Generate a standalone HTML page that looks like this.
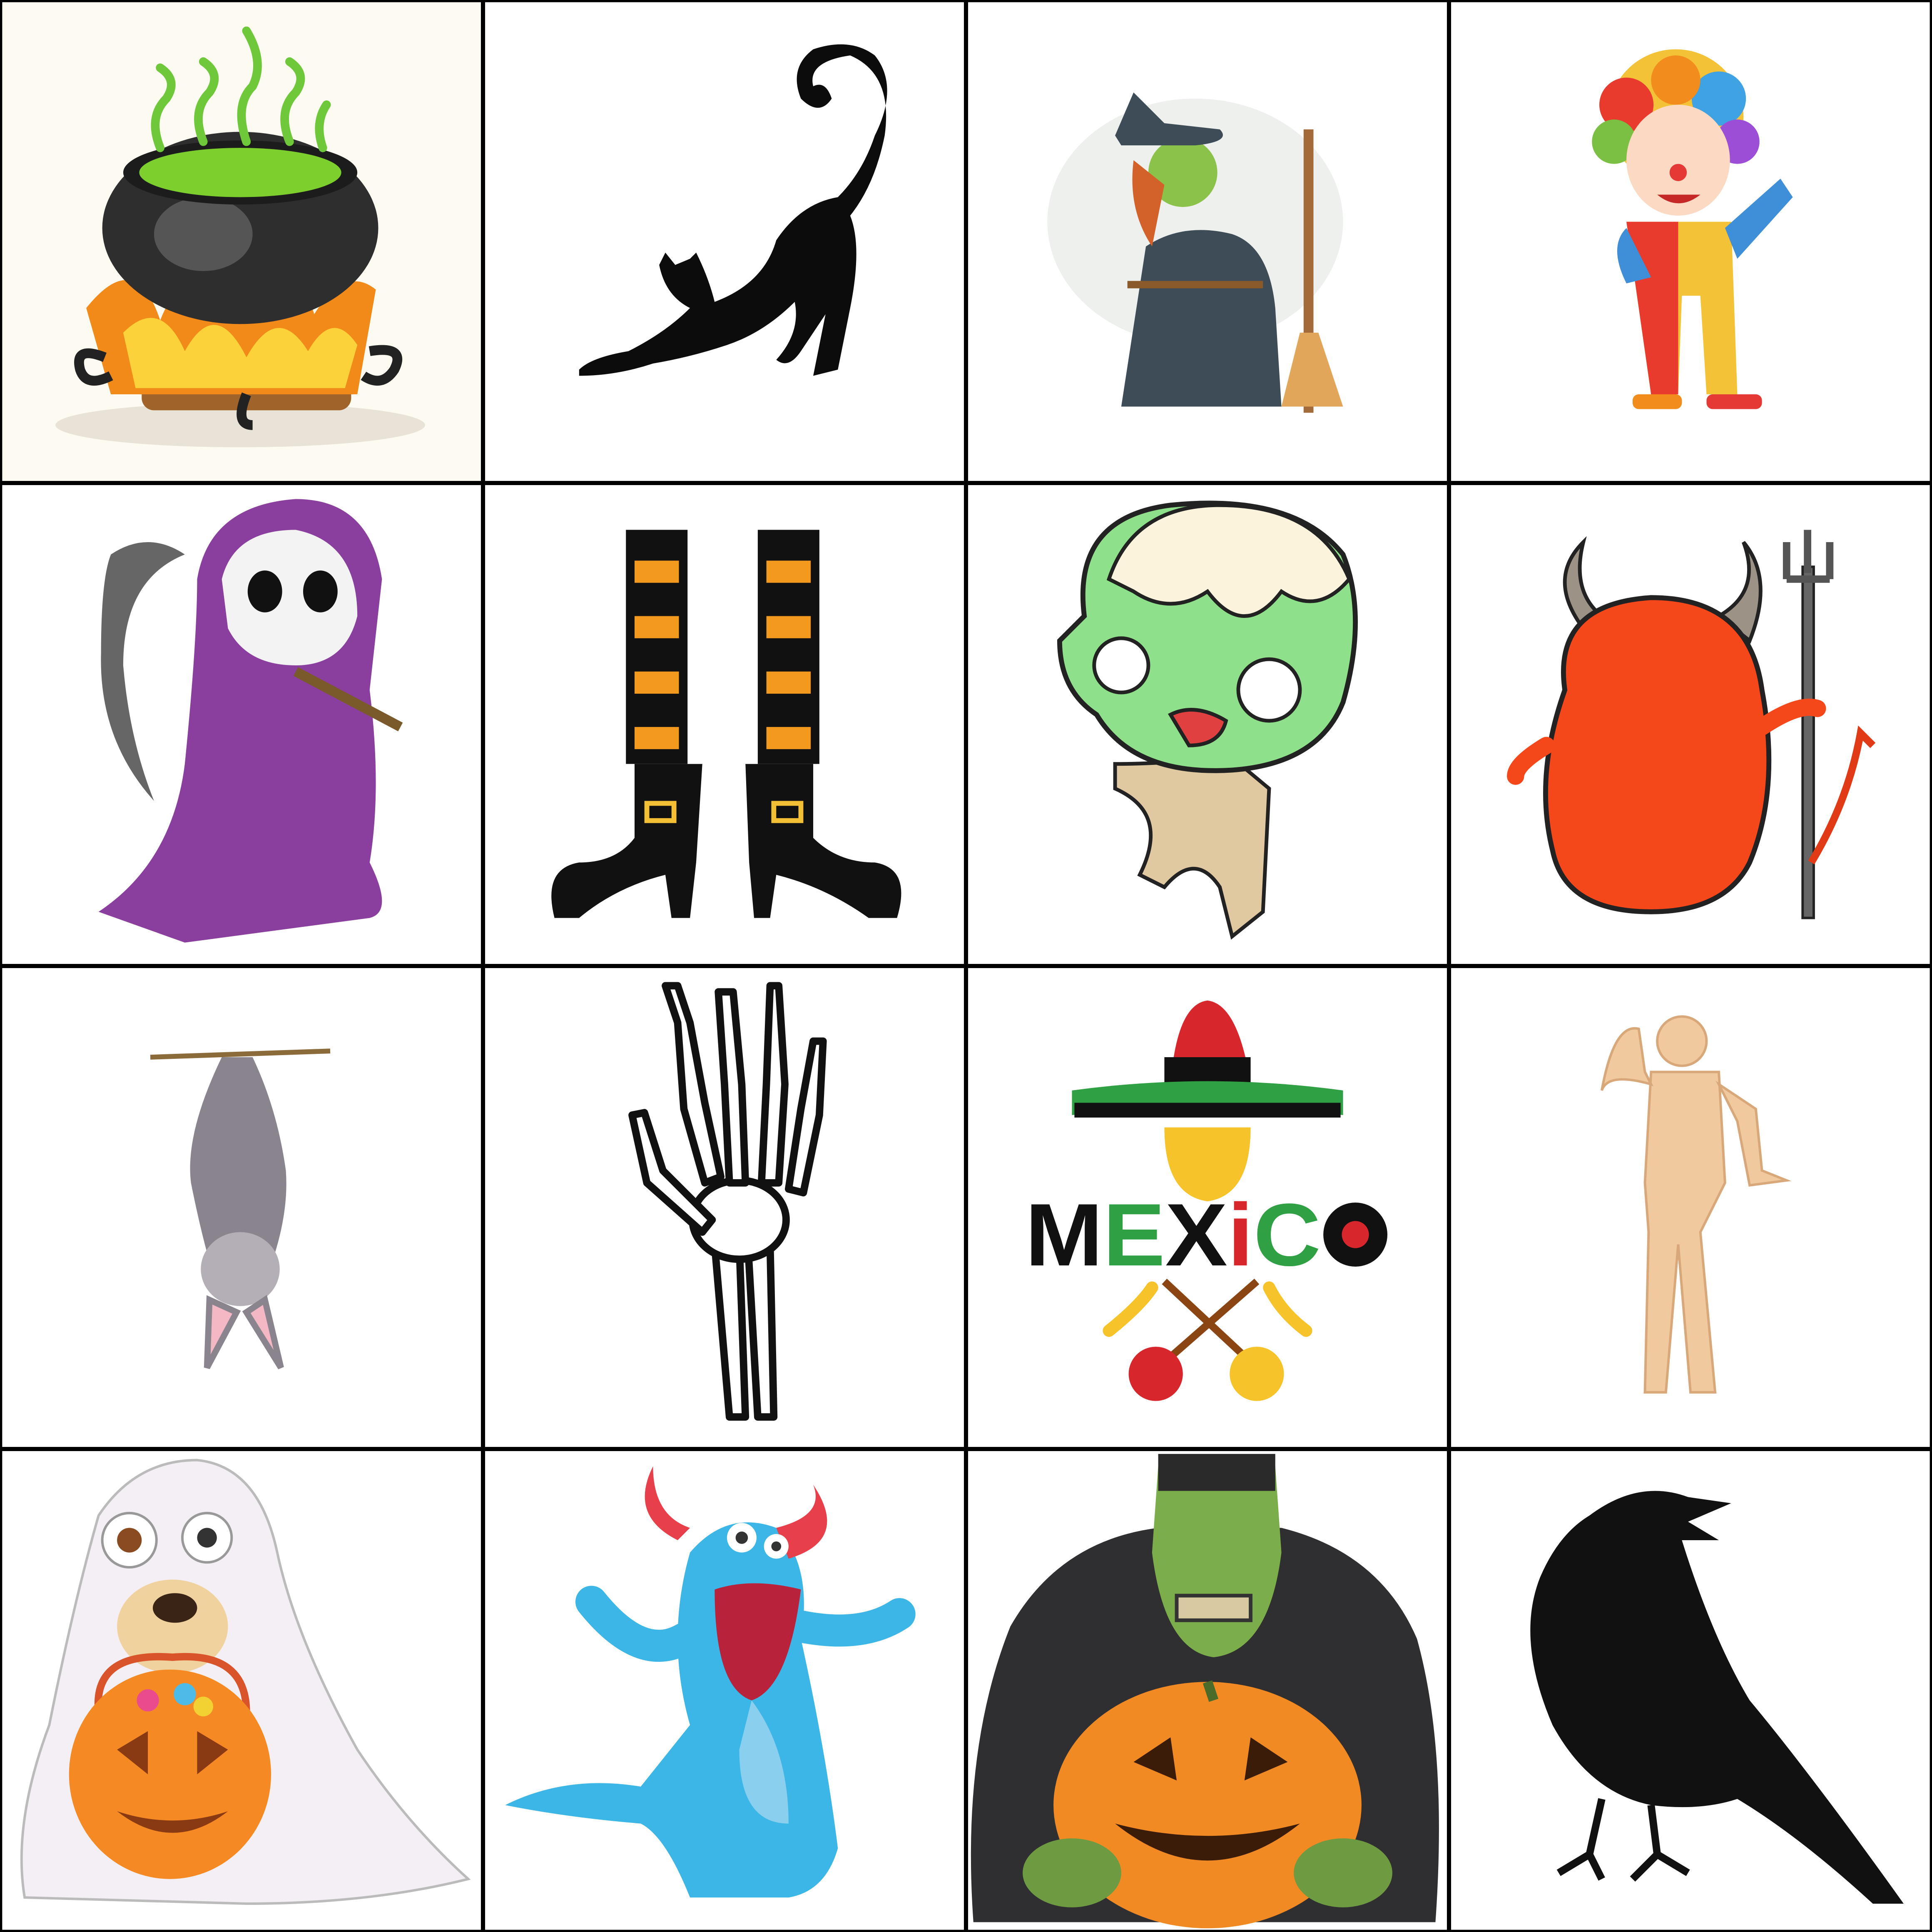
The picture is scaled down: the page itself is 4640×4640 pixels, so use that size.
<!DOCTYPE html>
<html><head><meta charset="utf-8"><style>
html,body{margin:0;padding:0;background:#fff}
svg{display:block}
</style></head><body>
<svg width="4640" height="4640" viewBox="0 0 1568 1568" xmlns="http://www.w3.org/2000/svg">
<rect width="1568" height="1568" fill="#fff"/>
<rect x="0" y="0" width="392" height="392" fill="#fdfaf1"/>

<!-- Cell 1: cauldron -->
<g>
<ellipse cx="195" cy="345" rx="150" ry="18" fill="#e8e3d6"/>
<rect x="115" y="305" width="170" height="28" rx="10" fill="#a0642a"/>
<path d="M70 250 Q110 200 130 260 Q150 210 170 255 Q195 200 215 255 Q240 205 255 255 Q280 215 305 235 L290 320 L90 320 Z" fill="#f28a1a"/>
<path d="M100 270 Q130 240 150 285 Q175 240 200 290 Q225 245 250 285 Q270 250 290 280 L280 315 L110 315 Z" fill="#fcd23a"/>
<ellipse cx="195" cy="185" rx="112" ry="78" fill="#2e2e2e"/>
<ellipse cx="165" cy="190" rx="40" ry="30" fill="#555"/>
<ellipse cx="195" cy="140" rx="95" ry="26" fill="#1c1c1c"/>
<ellipse cx="195" cy="140" rx="82" ry="20" fill="#7ccf2c"/>
<path d="M130 120 Q120 95 135 80 Q145 65 130 55 M165 115 Q155 90 170 75 Q180 60 165 50 M200 115 Q190 85 205 70 Q215 50 200 25 M235 115 Q225 90 240 75 Q250 60 235 50 M262 120 Q255 100 265 85" stroke="#6fc83a" stroke-width="7" fill="none" stroke-linecap="round"/>
<path d="M85 290 Q60 280 65 300 Q70 315 90 305 M300 285 Q330 280 320 300 Q310 315 295 305 M200 320 Q190 345 205 345" stroke="#222" stroke-width="8" fill="none"/>
</g>

<!-- Cell 2: cat -->
<path d="M470 300 Q480 290 510 285 Q540 270 560 250 Q540 240 535 215 L540 205 L548 215 L560 210 L565 205 Q575 225 580 245 Q620 230 630 195 Q650 165 680 160 Q700 140 710 110 Q730 70 710 45 Q690 30 660 40 Q640 55 650 80 Q665 95 675 80 Q670 65 660 70 Q655 50 690 45 Q725 60 718 110 Q710 150 690 175 Q700 200 690 250 L680 300 L660 305 L670 255 Q660 270 650 285 Q640 300 630 292 Q650 270 645 245 Q620 270 590 280 Q560 290 530 295 Q500 305 470 305 Z" fill="#0c0c0c"/>

<!-- Cell 3: witch -->
<ellipse cx="970" cy="180" rx="120" ry="100" fill="#eef0ee"/>
<path d="M910 330 L930 200 Q960 180 1000 190 Q1030 200 1035 250 L1040 330 Z" fill="#3e4c58"/>
<circle cx="960" cy="140" r="28" fill="#8bc34a"/>
<path d="M905 110 L920 75 L945 100 L990 105 Q1000 115 970 118 L910 118 Z" fill="#3e4c58"/>
<path d="M920 130 Q915 170 935 200 L945 150 Z" fill="#d2612a"/>
<rect x="1058" y="105" width="8" height="230" fill="#a36b3a"/>
<path d="M1055 270 L1070 270 L1090 330 L1040 330 Z" fill="#e1a659"/>
<rect x="915" y="228" width="110" height="6" fill="#8a5a2a"/>

<!-- Cell 4: clown -->
<circle cx="1360" cy="95" r="55" fill="#f4c236"/>
<circle cx="1320" cy="85" r="22" fill="#e83b2e"/><circle cx="1395" cy="80" r="22" fill="#3fa3e3"/><circle cx="1310" cy="115" r="18" fill="#7bc043"/><circle cx="1410" cy="115" r="18" fill="#9c4fd6"/><circle cx="1360" cy="65" r="20" fill="#f28c1c"/>
<ellipse cx="1362" cy="130" rx="42" ry="45" fill="#fbd9c2"/>
<circle cx="1362" cy="140" r="7" fill="#e53935"/>
<path d="M1345 158 Q1362 172 1380 158 Z" fill="#c62828"/>
<path d="M1320 180 L1405 180 L1410 320 L1385 320 L1380 240 L1365 240 L1362 320 L1340 320 Z" fill="#f4c236"/>
<path d="M1320 180 L1362 180 L1362 320 L1340 320 Z" fill="#e83b2e"/>
<path d="M1320 185 Q1305 200 1320 230 L1340 225 Z M1400 185 L1445 145 L1455 160 L1410 210 Z" fill="#3f8fd8"/>
<rect x="1325" y="320" width="40" height="12" rx="5" fill="#f28c1c"/><rect x="1385" y="320" width="45" height="12" rx="5" fill="#e53935"/>

<!-- Cell 5: reaper -->
<path d="M80 740 Q140 700 150 620 Q160 520 160 470 Q170 410 240 405 Q300 405 310 470 L300 560 Q310 640 300 700 Q320 740 300 745 L150 765 Z" fill="#8a3e9e"/>
<path d="M180 470 Q190 430 240 430 Q290 440 290 500 Q280 540 240 540 Q200 540 185 510 Z" fill="#f3f3f3"/>
<ellipse cx="215" cy="480" rx="14" ry="17" fill="#111"/><ellipse cx="260" cy="480" rx="14" ry="17" fill="#111"/>
<path d="M90 450 Q120 430 150 450 Q100 470 100 540 Q105 600 125 650 Q80 600 82 530 Q82 470 90 450 Z" fill="#666"/>
<path d="M240 545 L325 590" stroke="#7a5a2a" stroke-width="8"/>

<!-- Cell 6: boots -->
<g>
<rect x="508" y="430" width="50" height="190" fill="#111"/>
<rect x="615" y="430" width="50" height="190" fill="#111"/>
<g fill="#f39a1e">
<rect x="515" y="455" width="36" height="18"/><rect x="515" y="500" width="36" height="18"/><rect x="515" y="545" width="36" height="18"/><rect x="515" y="590" width="36" height="18"/>
<rect x="622" y="455" width="36" height="18"/><rect x="622" y="500" width="36" height="18"/><rect x="622" y="545" width="36" height="18"/><rect x="622" y="590" width="36" height="18"/>
</g>
<path d="M515 620 L570 620 L565 700 L560 745 L545 745 L540 710 Q500 720 470 745 L450 745 Q440 705 470 700 Q500 700 515 680 Z" fill="#111"/>
<path d="M605 620 L660 620 L660 680 Q680 700 710 700 Q740 705 728 745 L705 745 Q670 720 630 710 L625 745 L612 745 L608 700 Z" fill="#111"/>
<rect x="525" y="652" width="22" height="14" fill="none" stroke="#f3c035" stroke-width="4"/>
<rect x="628" y="652" width="22" height="14" fill="none" stroke="#f3c035" stroke-width="4"/>
</g>

<!-- Cell 7: zombie -->
<path d="M905 620 Q940 620 1000 615 L1030 640 L1025 740 L1000 760 L990 720 Q970 690 945 720 L925 710 Q950 660 905 640 Z" fill="#e0c9a0" stroke="#222" stroke-width="3"/>
<path d="M880 500 Q870 420 950 410 Q1050 400 1090 450 Q1110 500 1090 570 Q1070 620 1000 625 Q920 630 890 580 Q860 560 860 520 Z" fill="#8fe08a" stroke="#222" stroke-width="4"/>
<path d="M900 470 Q920 410 990 410 Q1070 410 1095 470 Q1070 500 1040 480 Q1010 520 980 480 Q950 500 920 480 Z" fill="#fbf3dc" stroke="#222" stroke-width="3"/>
<circle cx="910" cy="540" r="22" fill="#fff" stroke="#222" stroke-width="3"/>
<circle cx="1030" cy="560" r="25" fill="#fff" stroke="#222" stroke-width="3"/>
<path d="M950 580 Q970 570 995 585 Q990 605 965 605 Z" fill="#e04040" stroke="#222" stroke-width="3"/>

<!-- Cell 8: devil -->
<path d="M1285 510 Q1255 470 1285 440 Q1275 480 1300 500 Z" fill="#9d9286" stroke="#222" stroke-width="3"/>
<path d="M1395 500 Q1430 480 1415 440 Q1440 470 1420 520 Z" fill="#9d9286" stroke="#222" stroke-width="3"/>
<path d="M1270 560 Q1260 490 1340 485 Q1420 485 1430 560 Q1445 640 1420 700 Q1400 740 1340 740 Q1270 740 1260 690 Q1245 630 1270 560 Z" fill="#f4471a" stroke="#222" stroke-width="4"/>
<rect x="1463" y="460" width="9" height="285" fill="#666" stroke="#222" stroke-width="2"/>
<path d="M1450 470 L1450 440 M1467 465 L1467 430 M1485 470 L1485 440 M1450 470 L1485 470" stroke="#555" stroke-width="6" fill="none"/>
<path d="M1255 605 Q1230 620 1230 630 M1430 590 Q1460 570 1475 575" stroke="#f4471a" stroke-width="14" fill="none" stroke-linecap="round"/>
<path d="M1470 700 Q1500 650 1510 595 L1520 605" stroke="#e03a16" stroke-width="6" fill="none"/>

<!-- Cell 9: bat -->
<path d="M122 858 L268 853" stroke="#8b6b3a" stroke-width="4"/>
<path d="M180 858 Q150 920 155 960 Q165 1010 175 1040 L215 1040 Q235 990 232 950 Q225 900 205 858 Z" fill="#8a848e"/>
<ellipse cx="195" cy="1030" rx="32" ry="30" fill="#b4aeb7"/>
<path d="M170 1055 L168 1110 L192 1065 Z M215 1055 L228 1110 L200 1065 Z" fill="#f3b8c4" stroke="#8a848e" stroke-width="5"/>

<!-- Cell 10: skeleton hand -->
<g fill="#fff" stroke="#111" stroke-width="6" stroke-linejoin="round">
<path d="M580 1010 L592 1150 L605 1150 L600 1010 Z"/>
<path d="M607 1010 L615 1150 L628 1150 L625 1010 Z"/>
<ellipse cx="600" cy="990" rx="38" ry="32"/>
<path d="M540 800 L550 830 L555 900 L572 960 L585 955 L572 895 L560 830 L550 800 Z"/>
<path d="M583 805 L588 880 L592 960 L605 960 L602 880 L595 805 Z"/>
<path d="M625 800 L622 880 L618 960 L632 960 L637 880 L632 800 Z"/>
<path d="M660 845 L650 900 L640 965 L652 968 L665 905 L668 845 Z"/>
<path d="M513 905 L525 960 L570 1000 L578 990 L538 950 L523 903 Z"/>
</g>

<!-- Cell 11: Mexico -->
<path d="M950 880 Q955 815 980 812 Q1005 815 1015 880 Z" fill="#d8272c"/>
<rect x="945" y="858" width="70" height="22" fill="#111"/>
<path d="M870 885 Q980 870 1090 885 L1090 905 Q980 895 870 905 Z" fill="#2fa043"/>
<rect x="872" y="895" width="216" height="12" fill="#111"/>
<path d="M945 915 L1015 915 Q1015 970 980 975 Q945 970 945 915 Z" fill="#f6c42a"/>
<text x="832" y="1027" font-family="Liberation Sans, sans-serif" font-weight="bold" font-size="72" fill="#111" textLength="240" lengthAdjust="spacingAndGlyphs">M<tspan fill="#2fa043">E</tspan><tspan fill="#111">X</tspan><tspan fill="#d8272c">i</tspan><tspan fill="#2fa043">C</tspan></text>
<circle cx="1100" cy="1002" r="26" fill="#111"/><circle cx="1100" cy="1002" r="11" fill="#d8272c"/>
<path d="M940 1110 L1020 1040 M1020 1110 L945 1040" stroke="#8b4513" stroke-width="6"/>
<ellipse cx="938" cy="1115" rx="22" ry="22" fill="#d8272c"/>
<ellipse cx="1020" cy="1115" rx="22" ry="22" fill="#f6c42a"/>
<path d="M900 1080 Q925 1060 935 1045 M1060 1080 Q1040 1065 1030 1045" stroke="#f6c42a" stroke-width="10" fill="none" stroke-linecap="round"/>

<!-- Cell 12: mummy -->
<g fill="#f0c99e" stroke="#d9a87a" stroke-width="2">
<circle cx="1365" cy="845" r="20"/>
<path d="M1340 870 L1395 870 L1400 960 L1380 1000 L1392 1130 L1372 1130 L1362 1010 L1352 1130 L1335 1130 L1338 1000 L1335 960 Z"/>
<path d="M1340 880 Q1305 870 1300 885 Q1310 830 1330 835 L1335 870 Z"/>
<path d="M1395 880 L1425 900 L1430 950 L1450 958 L1420 962 L1410 910 Z"/>
</g>

<!-- Cell 13: ghost dog -->
<path d="M20 1540 Q10 1480 40 1400 Q60 1300 80 1230 Q110 1185 160 1185 Q210 1190 225 1260 Q240 1330 290 1420 Q330 1480 380 1525 Q300 1545 200 1545 Z" fill="#f3eff4" stroke="#bbb" stroke-width="2"/>
<circle cx="105" cy="1250" r="22" fill="#fff" stroke="#999" stroke-width="2"/><circle cx="105" cy="1250" r="10" fill="#8a4b20"/>
<circle cx="168" cy="1248" r="20" fill="#fff" stroke="#999" stroke-width="2"/><circle cx="168" cy="1248" r="8" fill="#333"/>
<ellipse cx="140" cy="1320" rx="45" ry="38" fill="#f0d29e"/>
<ellipse cx="142" cy="1305" rx="18" ry="12" fill="#3a2415"/>
<path d="M80 1390 Q75 1340 140 1345 Q200 1340 200 1390" stroke="#d9542a" stroke-width="6" fill="none"/>
<ellipse cx="138" cy="1440" rx="82" ry="85" fill="#f58a24"/>
<path d="M95 1420 L120 1405 L120 1440 Z M160 1405 L185 1420 L160 1440 Z M95 1470 Q140 1505 185 1470 Q140 1485 95 1470 Z" fill="#8a3a12"/>
<circle cx="120" cy="1380" r="9" fill="#e94b8c"/><circle cx="150" cy="1375" r="9" fill="#4dbbe8"/><circle cx="165" cy="1385" r="8" fill="#f2d233"/>

<!-- Cell 14: blue monster -->
<path d="M410 1465 Q460 1440 520 1450 L560 1400 Q540 1330 560 1260 Q590 1225 630 1240 Q660 1270 650 1330 Q670 1420 680 1500 Q670 1535 640 1540 L560 1540 Q540 1490 520 1480 Q460 1475 410 1465 Z" fill="#3cb6e6"/>
<path d="M480 1300 Q520 1350 555 1330 M650 1320 Q700 1330 730 1310" stroke="#3cb6e6" stroke-width="26" fill="none" stroke-linecap="round"/>
<path d="M550 1250 Q510 1230 530 1190 Q530 1230 560 1240 Z M630 1240 Q670 1230 660 1205 Q690 1250 640 1265 Z" fill="#e8404b"/>
<path d="M580 1290 Q610 1280 650 1290 Q640 1370 610 1380 Q580 1370 580 1290 Z" fill="#b8223a"/>
<circle cx="602" cy="1248" r="12" fill="#fff"/><circle cx="602" cy="1248" r="5" fill="#333"/>
<circle cx="630" cy="1255" r="10" fill="#fff"/><circle cx="630" cy="1255" r="4" fill="#333"/>
<path d="M610 1380 Q640 1420 640 1480 Q600 1480 600 1420 Z" fill="#8ad0ee"/>

<!-- Cell 15: Frankenstein -->
<path d="M790 1560 Q780 1420 820 1320 Q860 1250 940 1240 L1040 1240 Q1120 1260 1150 1330 Q1175 1420 1165 1560 Z" fill="#2f2f31"/>
<path d="M940 1190 L1035 1190 L1040 1260 Q1030 1340 985 1345 Q945 1340 935 1260 Z" fill="#7bae4a"/>
<rect x="940" y="1180" width="95" height="30" fill="#2a2a2a"/>
<rect x="955" y="1295" width="60" height="20" fill="#d9c9a0" stroke="#333" stroke-width="3"/>
<ellipse cx="980" cy="1465" rx="125" ry="100" fill="#f18a22"/>
<path d="M920 1430 L950 1410 L955 1445 Z M1015 1410 L1045 1430 L1010 1445 Z M905 1480 Q980 1540 1055 1480 Q980 1500 905 1480 Z" fill="#3a1c08"/>
<path d="M980 1365 L985 1380" stroke="#4b6b2a" stroke-width="8"/>
<ellipse cx="870" cy="1520" rx="40" ry="28" fill="#6e9a42"/><ellipse cx="1090" cy="1520" rx="40" ry="28" fill="#6e9a42"/>

<!-- Cell 16: crow -->
<path d="M1290 1230 Q1330 1200 1370 1215 L1405 1220 L1370 1235 L1395 1250 L1365 1250 Q1390 1330 1420 1380 Q1470 1440 1545 1545 L1520 1545 Q1460 1490 1410 1460 Q1380 1470 1340 1465 Q1290 1455 1260 1400 Q1230 1330 1250 1280 Q1265 1245 1290 1230 Z" fill="#111"/>
<path d="M1300 1460 L1290 1505 L1265 1520 M1290 1505 L1300 1525 M1340 1465 L1345 1505 L1325 1525 M1345 1505 L1370 1520" stroke="#111" stroke-width="6" fill="none"/>

<!-- grid lines -->
<g stroke="#000" stroke-width="3.4">
<line x1="392" y1="0" x2="392" y2="1568"/>
<line x1="784" y1="0" x2="784" y2="1568"/>
<line x1="1176" y1="0" x2="1176" y2="1568"/>
<line x1="0" y1="392" x2="1568" y2="392"/>
<line x1="0" y1="784" x2="1568" y2="784"/>
<line x1="0" y1="1176" x2="1568" y2="1176"/>
</g>
<rect x="0.9" y="0.9" width="1566.2" height="1566.2" fill="none" stroke="#000" stroke-width="1.8"/>
</svg>
</body></html>
